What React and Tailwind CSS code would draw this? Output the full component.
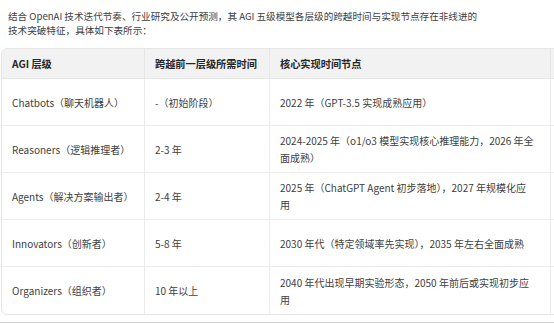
export default function App() {
  const rows = [
    ["Chatbots（聊天机器人）", "-（初始阶段）", ["2022 年（GPT-3.5 实现成熟应用）"]],
    ["Reasoners（逻辑推理者）", "2-3 年", ["2024-2025 年（o1/o3 模型实现核心推理能力，2026 年全", "面成熟）"]],
    ["Agents（解决方案输出者）", "2-4 年", ["2025 年（ChatGPT Agent 初步落地），2027 年规模化应", "用"]],
    ["Innovators（创新者）", "5-8 年", ["2030 年代（特定领域率先实现），2035 年左右全面成熟"]],
    ["Organizers（组织者）", "10 年以上", ["2040 年代出现早期实验形态，2050 年前后或实现初步应", "用"]],
  ];
  const font = { fontFamily: '"Noto Sans CJK SC", "Noto Sans", sans-serif' };
  return (
    <div className="w-[554px] h-[323px] overflow-hidden bg-white flex flex-col text-[#404040]" style={font}>
      <p className="pl-[8px] pt-[10px] leading-[13.5px] w-[484px] text-[9.6px]">
        结合 OpenAI 技术迭代节奏、行业研究及公开预测，其 AGI 五级模型各层级的跨越时间与实现节点存在非线进的技术突破特征，具体如下表所示：
      </p>
      <div className="mt-[11px] ml-[1px] w-[620px] shrink-0 border border-[#e6e6e6] rounded-[6px] overflow-hidden text-[10px]">
        <div className="grid grid-cols-[143px_125px_281px_1fr] h-[30px] bg-[#f2f2f2] border-b border-[#e6e6e6] font-bold text-[#262626] text-[10.2px]">
          <div className="flex items-center px-[10px] border-r border-[#e6e6e6]">AGI 层级</div>
          <div className="flex items-center px-[10px] border-r border-[#e6e6e6]">跨越前一层级所需时间</div>
          <div className="flex items-center px-[10px] border-r border-[#e6e6e6]">核心实现时间节点</div>
          <div></div>
        </div>
        {rows.map((r, i) => (
          <div
            key={i}
            className={`grid grid-cols-[143px_125px_281px_1fr] h-[47px] ${i < rows.length - 1 ? "border-b border-[#ececec]" : ""}`}
          >
            <div className="flex items-center px-[10px] border-r border-[#ececec]">{r[0]}</div>
            <div className="flex items-center px-[10px] border-r border-[#ececec]">{r[1]}</div>
            <div className="flex flex-col justify-center pl-[10px] pr-[6px] border-r border-[#ececec] leading-[17px] overflow-hidden">
              {r[2].map((line, j) => (
                <span key={j} className="whitespace-nowrap">{line}</span>
              ))}
            </div>
            <div></div>
          </div>
        ))}
      </div>
      <div className="mt-[7px] h-[4px] shrink-0 bg-[#e6e6e6] border-t-[2px] border-[#cfcfcf]"></div>
    </div>
  );
}
